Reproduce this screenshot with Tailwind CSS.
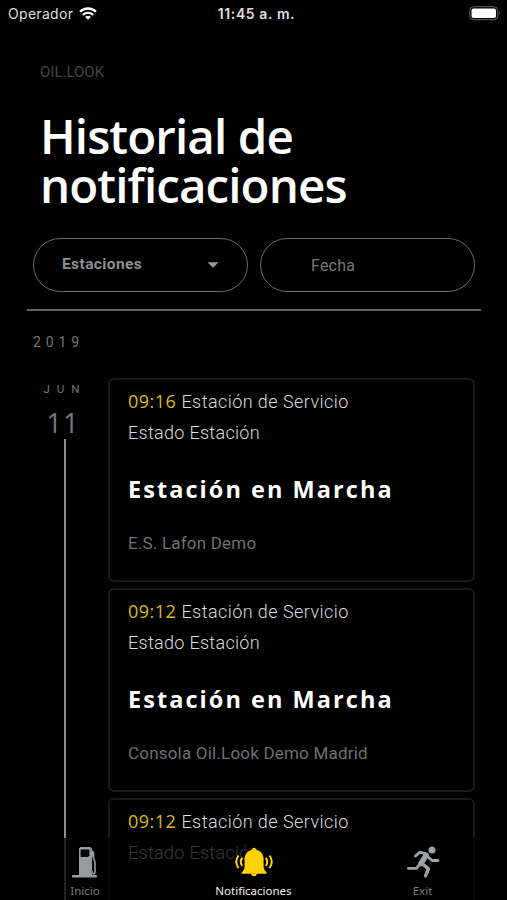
<!DOCTYPE html>
<html lang="es">
<head>
<meta charset="utf-8">
<title>Historial de notificaciones</title>
<script src="https://cdn.jsdelivr.net/npm/@tailwindcss/browser@4"></script>
</head>
<body class="bg-black">
<div class="relative flex h-[900px] w-[507px] flex-col overflow-hidden bg-black font-['Roboto',sans-serif] text-white">
  <header class="grid h-7 shrink-0 grid-cols-3 items-center pl-[8px] pr-[6px] font-['Inter',sans-serif] text-[14px] text-[#dedede]">
    <div class="flex items-center gap-[6px] pb-px">
      <span class="tracking-[0.300px]">Operador</span>
      <svg class="h-[13px] w-[18px]" viewBox="0 0 18 13" fill="none" stroke="#fff" stroke-width="2.3"><path d="M1 4.8C5.5.4 12.500.4 17 4.800M3.900 7.900c3-2.800 7.200-2.800 10.200 0"/><path d="M9 12.700 6.200 9.900c1.600-1.400 4-1.400 5.600 0z" fill="#fff" stroke="none"/></svg>
    </div>
    <div class="pb-px pl-[4px] whitespace-nowrap text-center font-semibold tracking-[0.600px]">11:45 a. m.</div>
    <svg class="mb-[2px] h-[15px] w-[32px] justify-self-end" viewBox="0 0 32 15"><rect x=".7" y=".7" width="28" height="13" rx="4" fill="none" stroke="#666"/><rect x="2.500" y="2.500" width="24.500" height="9.500" rx="2" fill="#fff"/><path d="M30.200 5.200q1.600 2 0 4z" fill="#777"/></svg>
  </header>

  <main class="flex flex-col">
    <p class="mt-[34px] pl-[40px] text-[15px] leading-5 text-[#444]">OIL.LOOK</p>
    <h1 class="mt-[29px] pl-[40px] font-['Open_Sans',sans-serif] text-[47.500px] leading-[49px] font-semibold tracking-[-0.900px]"><span class="block">Historial de</span><span class="block">notificaciones</span></h1>

    <div class="mt-[29px] flex gap-3 pl-[33px]">
      <div class="flex h-[54px] w-[215px] items-center justify-between rounded-full border border-[#6a6a6a] pr-[28px] pl-[28px] text-[15.5px] font-bold tracking-[0.400px] text-[#8d9193]">
        <span>Estaciones</span>
        <svg class="h-[6px] w-[12px]" viewBox="0 0 12 6"><path d="M.5.200h11L6 5.700z" fill="#9a9d9f"/></svg>
      </div>
      <div class="flex h-[54px] w-[215px] items-center rounded-full border border-[#6a6a6a] pt-[2px] pl-[50px] text-[16px] tracking-[0.200px] text-[#74787a]">Fecha</div>
    </div>
    <div class="mt-[17px] ml-[27px] h-[2px] w-[454px] bg-[#626262]"></div>
    <p class="mt-[21px] pl-[33px] text-[14px] leading-5 tracking-[4.900px] text-[#747474]">2019</p>

    <div class="mt-[26px] flex">
      <div class="flex w-[108px] shrink-0 flex-col items-center">
        <span class="mt-px ml-[22px] h-5 text-[11.500px] leading-5 tracking-[7px] text-[#777]">JUN</span>
        <span class="mt-[8px] ml-[18px] h-[32px] font-['Open_Sans',sans-serif] text-[27.500px] leading-[32px] tracking-[1px] text-[#777]">11</span>
        <div class="ml-[21px] h-[470px] w-[2px] bg-[#8c8c8c]"></div>
      </div>
      <div class="flex flex-col gap-[6px]">
        <article class="h-[204px] w-[367px] rounded-[6px] border-2 border-[#1a1a1a] pl-[18px]">
          <p class="mt-[6px] text-[18px] leading-[31px] font-light tracking-[0.300px] text-[#dcdcdc]"><span class="mr-[5px] font-['Open_Sans',sans-serif] font-normal tracking-[0.500px] text-[#dcbb13]">09:16</span><span class="tracking-[0.440px]">Estación de Servicio</span><br>Estado Estación</p>
          <h2 class="mt-[26px] font-['Open_Sans',sans-serif] text-[23.500px] leading-[30px] font-bold tracking-[2.050px]">Estación en Marcha</h2>
          <p class="mt-[28px] text-[17px] leading-[22px] tracking-[0.200px] text-[#6d7173]">E.S. Lafon Demo</p>
        </article>
        <article class="h-[204px] w-[367px] rounded-[6px] border-2 border-[#1a1a1a] pl-[18px]">
          <p class="mt-[6px] text-[18px] leading-[31px] font-light tracking-[0.300px] text-[#dcdcdc]"><span class="mr-[5px] font-['Open_Sans',sans-serif] font-normal tracking-[0.500px] text-[#dcbb13]">09:12</span><span class="tracking-[0.440px]">Estación de Servicio</span><br>Estado Estación</p>
          <h2 class="mt-[26px] font-['Open_Sans',sans-serif] text-[23.500px] leading-[30px] font-bold tracking-[2.050px]">Estación en Marcha</h2>
          <p class="mt-[28px] text-[17px] leading-[22px] tracking-[0.200px] text-[#6d7173]">Consola Oil.Look Demo Madrid</p>
        </article>
        <article class="h-[204px] w-[367px] rounded-[6px] border-2 border-[#1a1a1a] pl-[18px]">
          <p class="mt-[6px] text-[18px] leading-[31px] font-light tracking-[0.300px] text-[#dcdcdc]"><span class="mr-[5px] font-['Open_Sans',sans-serif] font-normal tracking-[0.500px] text-[#dcbb13]">09:12</span><span class="tracking-[0.440px]">Estación de Servicio</span><br>Estado Estación</p>
        </article>
      </div>
    </div>
  </main>

  <nav class="absolute inset-x-0 bottom-0 grid h-[62px] grid-cols-3 bg-black/75 font-['Noto_Sans',sans-serif] text-[11.500px] text-[#777b7d]">
    <div class="flex flex-col items-center gap-[3px] pt-[6px]">
      <svg class="h-[36px] w-[28px]" viewBox="0 0 28 36"><path d="M8 4.500 9.500 3H19l2 1.500V31h4.800v2.500H1V31h7z" fill="#969b9e"/><path d="M9.600 5.500h8.800v6L17 13H9.600z" fill="#050505"/><path d="m19 5 3.500 3.500V14l1.500 4v10q-.8 2.500-2.300 1.500L20.500 27" fill="none" stroke="#868b8e" stroke-width="1.800"/><path d="M20.500 7 23 10v4l-2.500-1z" fill="#969b9e"/></svg>
      <span class="pl-px leading-4">Inicio</span>
    </div>
    <div class="flex flex-col items-center gap-[3px] pt-[6px] text-[#eee]">
      <svg class="h-[36px] w-[38px]" viewBox="0 0 38 36"><g fill="#ffd200"><path d="M19 3.800c1.200 0 2 .8 2 2 4.800 1.200 7.600 4.600 7.600 9.500v7.200c0 2.700 1.400 4.500 3 6v1.200H6.600v-1.200c1.600-1.500 3-3.300 3-6v-7.200c0-4.900 2.800-8.300 7.400-9.500 0-1.200.8-2 2-2z"/><path d="M15.800 29.500h6.400q-.7 2.800-3.200 2.800t-3.200-2.800z"/></g><g fill="none" stroke="#ffd200" stroke-width="2"><path d="M7.200 13.800c-1.800 2.500-1.800 5.500 0 8M3.600 11.500c-3 4-3 8.600 0 12.600M30.800 13.800c1.800 2.500 1.800 5.500 0 8M34.400 11.500c3 4 3 8.600 0 12.600"/></g></svg>
      <span class="leading-4">Notificaciones</span>
    </div>
    <div class="flex flex-col items-center gap-[3px] pt-[6px]">
      <svg class="h-[36px] w-[36px]" viewBox="0 0 36 36" fill="none" stroke="#9da1a4" stroke-linecap="round" stroke-linejoin="round"><circle cx="27" cy="6" r="3.500" fill="#9da1a4" stroke="none"/><path d="M10.500 12 15 8.200l7 2M22.500 12.500l4.500 4h6M3.500 24.400h8l4-5" stroke-width="2.900"/><path d="m21 11.500-5 8" stroke-width="5.500"/><path d="m17.500 20 6 4.800-3 7" stroke-width="3.400"/></svg>
      <span class="leading-4">Exit</span>
    </div>
  </nav>
</div>
</body>
</html>
